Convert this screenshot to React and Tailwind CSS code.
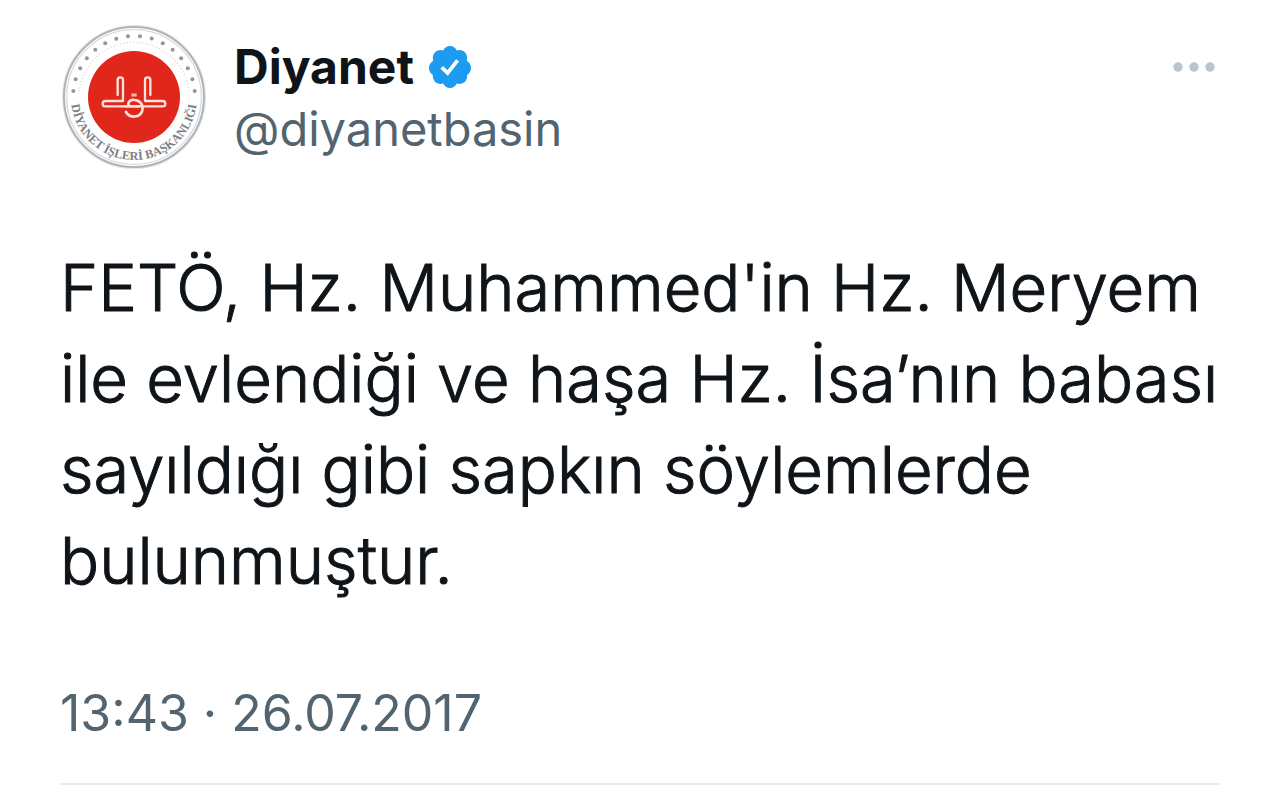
import React from 'react';

const STARS = Array.from({ length: 16 }, (_, i) => {
  const angle = ((185.6 + i * 11.25) * Math.PI) / 180;
  return { x: 238 + 183 * Math.cos(angle), y: 246 + 183 * Math.sin(angle) };
});

const Avatar = () => (
  <svg viewBox="22 30 432 432" className="w-36 h-36 shrink-0" role="img" aria-label="Diyanet">
    <circle cx="238" cy="246" r="214" fill="#fff" stroke="#e6e7e8" strokeWidth="4" />
    <circle cx="238" cy="246" r="210" fill="none" stroke="#b0b3b6" strokeWidth="6" />
    <circle cx="238" cy="246" r="202" fill="none" stroke="#d9dbdd" strokeWidth="4" />
    {STARS.map((star) => (
      <circle key={star.x} cx={star.x} cy={star.y} r="6" fill="#92979c" />
    ))}
    <path
      d="M73 230A166 166 0 0 1 403 230"
      fill="none"
      stroke="#dccfcf"
      strokeWidth="4"
      strokeDasharray="3 7"
    />
    <circle cx="238" cy="246" r="138" fill="#e1261c" />
    {/* Emblem */}
    <g fill="none" stroke="#fbe3dc" strokeLinejoin="round" strokeLinecap="round">
      <g strokeWidth="7">
        <path d="M189 240V194Q189 187 197 187T205 194V258H152Q144 258 144 266T152 274H208" />
        <path d="M287 240V194Q287 187 279 187T271 194V258H324Q332 258 332 266T324 274H250" />
      </g>
      <path
        d="M212 274H252M222 272C218 258 230 254 240 255C254 256 264 266 264 279C264 294 253 305 239 305C228 305 219 300 214 291"
        strokeWidth="8"
      />
      <path d="M230 240H246" stroke="#f6bdb3" strokeWidth="9" strokeLinecap="butt" />
    </g>
    <path id="emblem-arc" d="M49 246A189 189 0 0 0 427 246" fill="none" />
    <text fill="#7c8186" fontSize="37" fontWeight="700" fontFamily="Liberation Serif, serif">
      <textPath href="#emblem-arc" startOffset="50%" textAnchor="middle">
        DİYANET İŞLERİ BAŞKANLIĞI
      </textPath>
    </text>
  </svg>
);

const VerifiedBadge = () => (
  <svg viewBox="1 1 22 22" className="w-11 h-11 shrink-0" role="img" aria-label="Verified account">
    <path
      fill="#1d9bf0"
      d="M22.5 12.5c0-1.58-.875-2.95-2.148-3.6.154-.435.238-.905.238-1.4 0-2.21-1.71-3.998-3.818-3.998-.47 0-.92.084-1.336.25C14.818 2.415 13.51 1.5 12 1.5s-2.816.917-3.437 2.25c-.415-.165-.866-.25-1.336-.25-2.11 0-3.818 1.79-3.818 4 0 .494.083.964.237 1.4-1.272.65-2.147 2.018-2.147 3.6 0 1.495.782 2.798 1.942 3.486-.02.17-.032.34-.032.514 0 2.21 1.708 4 3.818 4 .47 0 .92-.086 1.335-.25.62 1.334 1.926 2.25 3.437 2.25 1.512 0 2.818-.916 3.437-2.25.415.163.865.248 1.336.248 2.11 0 3.818-1.79 3.818-4 0-.174-.012-.344-.033-.513 1.158-.687 1.943-1.99 1.943-3.484z"
    />
    <path fill="none" stroke="#fff" strokeWidth="1.9" d="M7.9 12.2l2.9 2.8 5-6.3" />
  </svg>
);

export default function App() {
  return (
    <article className="bg-white pt-[25px] px-[60px] font-['Inter',sans-serif] text-[#0f1419]">
      {/* Author */}
      <header className="flex items-start pl-[2px]">
        <Avatar />
        <div className="ml-7 mt-[14px]">
          <div className="flex items-center gap-[14px]">
            <h1 className="text-[48px] leading-[56px] font-bold">Diyanet</h1>
            <VerifiedBadge />
          </div>
          <a href="#" className="block text-[47px] leading-[68px] text-[#536471]">
            @diyanetbasin
          </a>
        </div>
        <button type="button" aria-label="More" className="ml-auto mt-[32px] mr-[5px]">
          <svg viewBox="0 0 42 20" className="w-[42px] h-5" fill="#b9c6cd">
            <circle cx="5" cy="10" r="4.7" />
            <circle cx="21" cy="10" r="4.7" />
            <circle cx="37" cy="10" r="4.7" />
          </svg>
        </button>
      </header>

      {/* Tweet text */}
      <p className="mt-[73px] text-[65px] leading-[91px] font-light whitespace-nowrap [-webkit-text-stroke:1px_#0f1419]">
        FETÖ, Hz. Muhammed'in Hz. Meryem
        <br />
        ile evlendiği ve haşa Hz. İsa’nın babası
        <br />
        sayıldığı gibi sapkın söylemlerde
        <br />
        bulunmuştur.
      </p>

      <footer className="mt-[73px] pb-[36px] border-b-2 border-[#e7e9ea] text-[#536471]">
        <time dateTime="2017-07-26T13:43" className="block text-[50px] leading-[68px]">
          13:43 · 26.07.2017
        </time>
      </footer>
    </article>
  );
}
